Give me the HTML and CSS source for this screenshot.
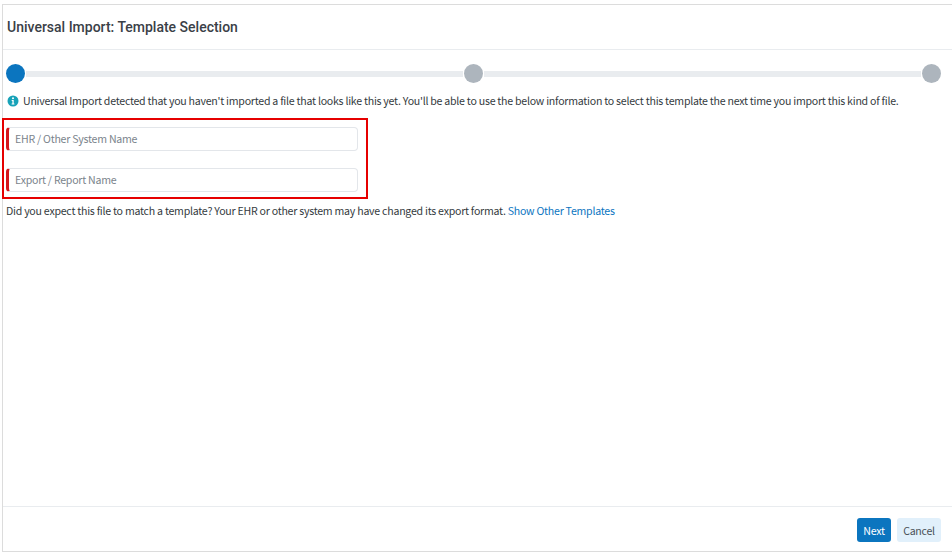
FILE: index.html
```html
<!DOCTYPE html>
<html lang="en">
<head>
<meta charset="utf-8">
<title>Universal Import: Template Selection</title>
<link rel="stylesheet" href="styles.css">
</head>
<body>
<main class="modal">
  <header class="modal-header"><h1>Universal Import: Template Selection</h1></header>
  <section class="modal-body">
    <div class="stepper">
      <span class="dot dot-active"></span>
      <span class="bar"></span>
      <span class="dot"></span>
      <span class="bar"></span>
      <span class="dot"></span>
    </div>
    <p class="info">
      <svg class="info-icon" viewBox="0 0 12 12" aria-hidden="true">
        <circle cx="6" cy="6" r="5.5" fill="#17a2b8"/>
        <circle cx="6" cy="3.3" r="1" fill="#fff"/>
        <path d="M4.7 5h2v3.4h.7v1H4.6v-1h.8V6h-.7z" fill="#fff"/>
      </svg>
      Universal Import detected that you haven't imported a file that looks like this yet. You'll be able to use the below information to select this template the next time you import this kind of file.
    </p>
    <div class="fields">
      <input class="field" type="text" placeholder="EHR / Other System Name">
      <input class="field" type="text" placeholder="Export / Report Name">
      <div class="highlight"></div>
    </div>
    <p class="hint">Did you expect this file to match a template? Your EHR or other system may have changed its export format. <a href="#">Show Other Templates</a></p>
  </section>
  <footer class="modal-footer">
    <button class="btn btn-primary" type="button">Next</button>
    <button class="btn btn-light" type="button">Cancel</button>
  </footer>
</main>
</body>
</html>
```
FILE: styles.css
```css
* { box-sizing: border-box; }
html, body { margin: 0; height: 100%; background: #fff; }
body {
  padding: 4px 0 0 2px;
  font-family: "Noto Sans CJK SC", "Noto Sans", sans-serif;
  font-size: 10.6px;
  letter-spacing: -0.25px;
  color: #343a40;
  overflow: hidden;
}
.modal {
  display: flex;
  flex-direction: column;
  width: 950px;
  height: 548px;
  border: 1px solid #dcdcdc;
  border-right: 0;
}
.modal-header {
  flex: none;
  height: 45px;
  padding: 0 4px;
  display: flex;
  align-items: center;
  border-bottom: 1px solid #e9ecef;
}
.modal-header h1 {
  margin: 0;
  font-family: Roboto, sans-serif;
  font-size: 14px;
  font-weight: 500;
  letter-spacing: 0;
  color: #3a4047;
}
.modal-body { flex: 1; padding: 14px 11px 0 3px; }
.stepper { display: flex; align-items: center; height: 19px; gap: 1px; }
.dot { flex: none; width: 19px; height: 19px; border-radius: 50%; background: #adb5bd; }
.dot-active { background: #0b75bf; }
.bar { flex: 1; height: 6px; background: #e9ecef; }
.info { margin: 9px 0 0; line-height: 18px; white-space: nowrap; display: flex; align-items: center; gap: 4px; }
.info-icon { flex: none; width: 12px; height: 12px; margin-left: 1px; }
.fields { position: relative; margin-top: 17px; width: 352px; display: flex; flex-direction: column; gap: 17px; }
.field {
  display: block;
  width: 100%;
  height: 24px;
  padding: 0 6px 2px;
  font: inherit;
  letter-spacing: inherit;
  color: #495057;
  background: #fff;
  border: 1px solid #e3e6ea;
  border-left: 3px solid #d4161c;
  border-radius: 4px;
  outline: 0;
}
.field::placeholder { color: #7b848c; opacity: 1; }
.highlight {
  position: absolute;
  left: -4px;
  top: -9px;
  width: 366px;
  height: 81px;
  border: 2px solid #e60000;
  pointer-events: none;
}
.hint { margin: 10px 0 0; line-height: 18px; white-space: nowrap; }
.hint a { color: #0b75bf; text-decoration: none; }
.modal-footer {
  flex: none;
  height: 45px;
  padding: 11px 11px 0 0;
  display: flex;
  justify-content: flex-end;
  align-items: flex-start;
  gap: 6px;
  border-top: 1px solid #e9ecef;
}
.btn {
  height: 24px;
  padding: 0;
  border: 0;
  border-radius: 3px;
  font: inherit;
  letter-spacing: inherit;
}
.btn-primary { width: 34px; background: #0b75bf; color: #fff; }
.btn-light { width: 44px; background: #e1f0fb; color: #495057; }
```
